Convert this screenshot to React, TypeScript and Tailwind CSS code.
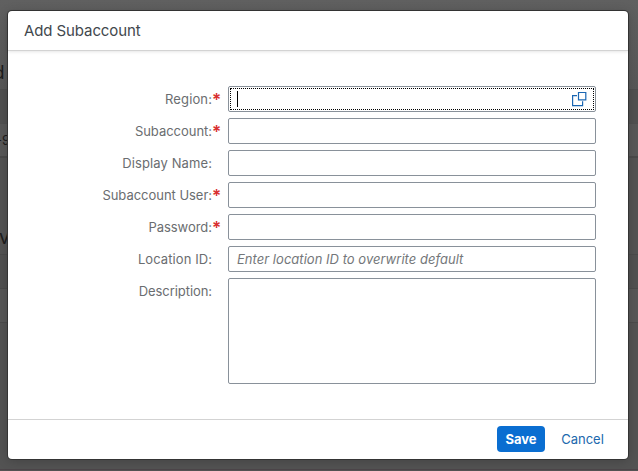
type Field = {
  label: string;
  required?: boolean;
  kind?: "lookup" | "area";
  placeholder?: string;
  tracking: string;
};

const fields: Field[] = [
  { label: "Region:", required: true, kind: "lookup", tracking: "tracking-[0.12px]" },
  { label: "Subaccount:", required: true, tracking: "tracking-[-0.03px]" },
  { label: "Display Name:", tracking: "tracking-[0.1px]" },
  { label: "Subaccount User:", required: true, tracking: "tracking-[-0.03px]" },
  { label: "Password:", required: true, tracking: "tracking-[-0.04px]" },
  { label: "Location ID:", placeholder: "Enter location ID to overwrite default", tracking: "tracking-[0.08px]" },
  { label: "Description:", kind: "area", tracking: "tracking-[-0.07px]" },
];

function ValueHelpIcon() {
  return (
    <svg width="15" height="15" viewBox="0 0 15 15" fill="none" stroke="#1b67b3" strokeWidth="1.2" className="mr-[6px] shrink-0">
      <path d="M6.5 .5h7.3v7.3H6.5z" />
      <path d="M5 3.7H.6v10h10V9.2" />
    </svg>
  );
}

function Control({ field }: { field: Field }) {
  if (field.kind === "area") {
    return <div className="h-[106px] w-[368px] rounded-[2px] border border-[#89919a] bg-white" />;
  }
  if (field.kind === "lookup") {
    return (
      <div className="h-[26px] w-[368px] rounded-[2px] border border-[#89919a] bg-white p-px">
        <div className="flex h-full items-center justify-between border border-dotted border-black pl-[6px]">
          <div className="h-4 w-px bg-black" />
          <ValueHelpIcon />
        </div>
      </div>
    );
  }
  return (
    <div className="flex h-[26px] w-[368px] items-center rounded-[2px] border border-[#89919a] bg-white pl-2">
      <span className="whitespace-nowrap text-[13px] leading-6 tracking-[0.03px] text-[#74777a] italic">{field.placeholder}</span>
    </div>
  );
}

function PageBehind() {
  return (
    <div className="h-full text-[#1c1c1c]">
      <div className="flex h-[90px] items-end border-b border-[#4e4e4e] bg-gradient-to-b from-[#606060] to-[#575757]">
        <span className="-ml-[6.5px] pb-[4px] text-[18px] leading-6">d</span>
      </div>
      <div className="h-[33px] bg-[#515151]" />
      <div className="flex h-[35px] items-center border-t border-b-2 border-t-[#505050] border-b-[#4a4a4a] bg-[#585858] pt-0.5">
        <span className="-ml-[4px] text-[13px]">-9</span>
      </div>
      <div className="flex h-[97px] items-end border-b border-[#4b4b4b] bg-[#535353] pb-[2px]">
        <span className="-ml-px text-[19px] leading-7">v</span>
      </div>
      <div className="h-[34px] border-b border-[#4b4b4b] bg-[#515151]" />
      <div className="h-[34px] border-b border-[#4b4b4b] bg-[#575757]" />
      <div className="h-[147px] border-b border-[#4c4549] bg-[#535353]" />
    </div>
  );
}

export default function App() {
  return (
    <div className="relative h-[471px] w-[638px] overflow-hidden bg-[#535353] font-['Inter',sans-serif]">
      <PageBehind />
      <div className="absolute top-[11px] left-2 flex h-[448px] w-[620px] flex-col rounded-[4px] bg-white shadow-[0_0_0_1px_#343434,0_2px_12px_rgba(0,0,0,0.2)]">
        <header className="flex h-10 items-center border-b border-[#d3d3d3] pt-px pl-4 text-[15px] tracking-[-0.1px] text-[#42484d] shadow-[0_1px_3px_rgba(0,0,0,0.1)]">
          <span>Add Subaccount</span>
        </header>
        <main className="flex flex-1 flex-col gap-[6px] pt-[35px]">
          {fields.map((field) => (
            <div key={field.label} className="flex items-start">
              <div className="flex w-[220px] justify-end pr-2 text-[13px] leading-[26px] text-[#6a6d70]">
                <span className={field.tracking}>{field.label}</span>
                <span className="w-2 text-center text-[17px] leading-[28px] -mb-1 font-semibold text-[#d93030]">{field.required ? "*" : ""}</span>
              </div>
              <Control field={field} />
            </div>
          ))}
        </main>
        <footer className="flex h-10 items-center justify-end gap-4 border-t border-[#d3d3d3] pr-6 pb-px text-[13px]">
          <button className="h-[26px] w-12 rounded-[4px] bg-[#0a6ed1] pt-px font-bold text-white">Save</button>
          <button className="w-[43px] whitespace-nowrap pt-0.5 text-[#2068ad]">Cancel</button>
        </footer>
      </div>
    </div>
  );
}
